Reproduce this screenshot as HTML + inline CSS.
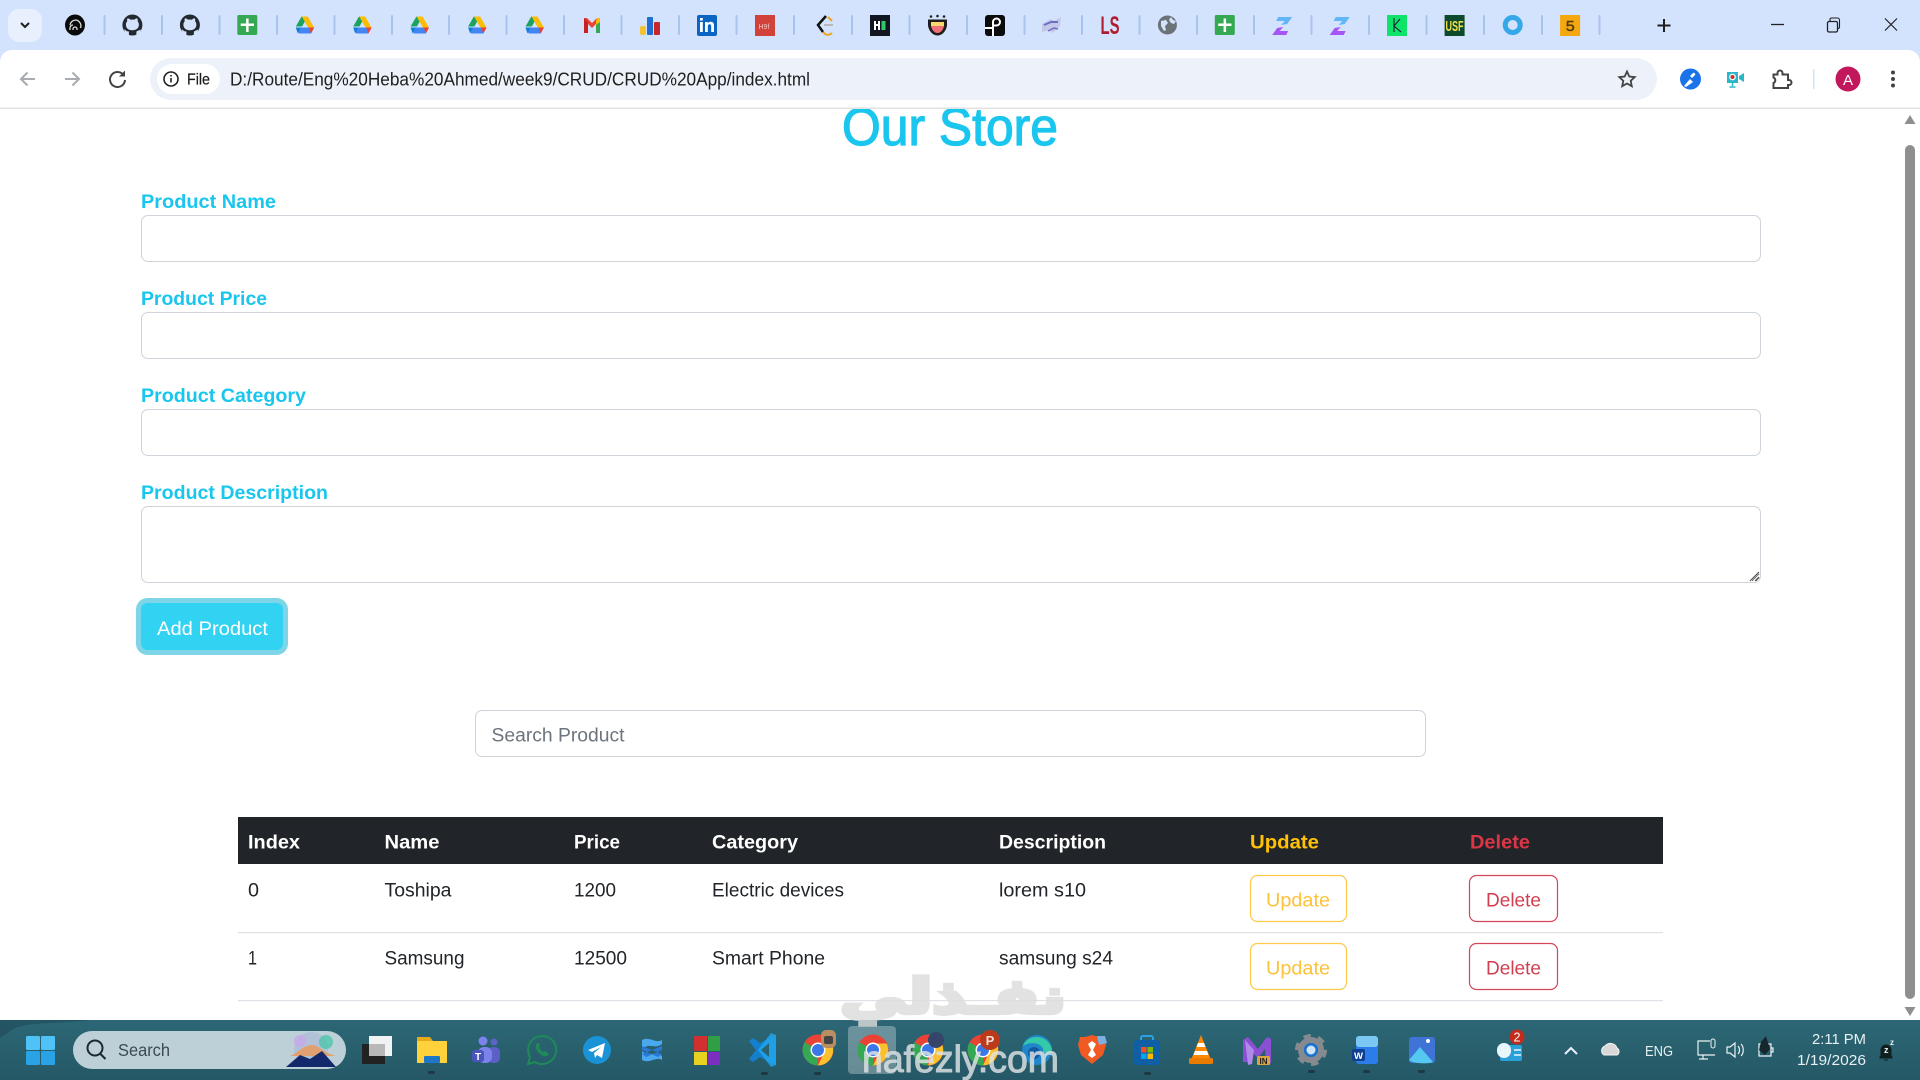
<!DOCTYPE html>
<html lang="en">
<head>
<meta charset="utf-8">
<title>Our Store</title>
<style>
html,body{margin:0;padding:0;width:1920px;height:1080px;overflow:hidden;background:#fff}
body{position:relative;font-family:"Liberation Sans",sans-serif}
.f{position:absolute;box-sizing:border-box;border:1.2px solid #ced4da;border-radius:7px;background:#fff;margin:0;padding:0;outline:none;display:block}
svg#o{position:absolute;left:0;top:0}
text{font-family:"Liberation Sans",sans-serif}
</style>
</head>
<body>
<input class="f" style="left:141px;top:215px;width:1620px;height:47px">
<input class="f" style="left:141px;top:312px;width:1620px;height:47px">
<input class="f" style="left:141px;top:409px;width:1620px;height:47px">
<textarea class="f" style="left:141px;top:506px;width:1620px;height:77px"></textarea>
<input class="f" style="left:475px;top:710px;width:951px;height:47px">

<svg id="o" width="1920" height="1080" viewBox="0 0 1920 1080" xmlns="http://www.w3.org/2000/svg">
<defs>
<symbol id="drive" viewBox="0 0 20 20" overflow="visible">
<path d="M7 1.500h6L7.500 11.500H1.200z" fill="#1aa260" transform="translate(-.2 0)"/>
<path d="M7 1.500h6l6.300 11h-6z" fill="#fbbc04"/>
<path d="M4.200 18.500 1 12.500h18.400l-3.200 6z" fill="#4285f4"/>
<path d="M1 12.500h5l-3 6z" fill="#0f7fd6"/>
<path d="M14 12.500h5.400l-3.200 6z" fill="#ea4335"/>
</symbol>
<symbol id="gh" viewBox="0 0 20 20" overflow="visible">
<ellipse cx="10" cy="10" rx="10" ry="10.500" fill="#24292f"/>
<path transform="translate(10 9) scale(1.300) translate(-10 -9)" d="M5 9.500c0-1 .4-1.900 1-2.600-.2-.7-.1-1.600.2-2.200 1 0 1.900.5 2.400 1a8 8 0 0 1 2.800 0c.5-.5 1.400-1 2.400-1 .3.600.4 1.500.2 2.200.6.700 1 1.600 1 2.600 0 3-2.300 4.300-5 4.300s-5-1.300-5-4.300z" fill="#d3e3fd"/>
<path d="M1.500 14.500c1.500.2 2 1.200 3 1.800l2 .2v4l-3-1.500zM18.500 14.500l-3 1.200-1.500.8v4l3-1.500z" fill="#d3e3fd"/>
</symbol>
<symbol id="sheet" viewBox="0 0 20 20" overflow="visible">
<rect width="20" height="20" rx="1.500" fill="#34a853"/>
<path d="M8.800 3.500h2.500v5h5.400v2.500h-5.400v6H8.800v-6H3.400V8.500h5.400z" fill="#fff"/>
</symbol>
<symbol id="zee" viewBox="0 0 20 20" overflow="visible">
<path d="M6 1h14l-5 7-6 1 3.500-4H4z" fill="#62b6f5"/>
<path d="M14 19H0l5-7 6-1-3.500 4H16z" fill="#a855f7"/>
</symbol>
<symbol id="chrome" viewBox="0 0 32 32" overflow="visible">
<circle cx="16" cy="16" r="15.500" fill="#ea4335"/>
<path d="M16 16 2.600 8.300 A15.500 15.500 0 0 0 16 31.500z" fill="#34a853"/>
<path d="M16 9.500h13.700A15.500 15.500 0 0 1 16 31.500l6-13z" fill="#fbc02d"/>
<circle cx="16" cy="16" r="7.500" fill="#fff"/>
<circle cx="16" cy="16" r="6" fill="#3b78e7"/>
</symbol>
</defs>

<!-- tab strip -->
<rect x="0" y="0" width="1920" height="62" fill="#d3e3fd"/>
<rect x="8" y="9" width="34" height="33" rx="11" fill="#e8f0fd"/>
<path d="M21 23l4 4 4-4" fill="none" stroke="#1f1f1f" stroke-width="2"/>
<g fill="#a9c3ee">
<rect x="103.500" y="15" width="2" height="20" rx="1"/><rect x="161" y="15" width="2" height="20" rx="1"/><rect x="218.500" y="15" width="2" height="20" rx="1"/><rect x="276" y="15" width="2" height="20" rx="1"/><rect x="333.500" y="15" width="2" height="20" rx="1"/><rect x="391" y="15" width="2" height="20" rx="1"/><rect x="448" y="15" width="2" height="20" rx="1"/><rect x="505.500" y="15" width="2" height="20" rx="1"/><rect x="563" y="15" width="2" height="20" rx="1"/><rect x="620.500" y="15" width="2" height="20" rx="1"/><rect x="678" y="15" width="2" height="20" rx="1"/><rect x="735.500" y="15" width="2" height="20" rx="1"/><rect x="793" y="15" width="2" height="20" rx="1"/><rect x="851" y="15" width="2" height="20" rx="1"/><rect x="908.500" y="15" width="2" height="20" rx="1"/><rect x="966" y="15" width="2" height="20" rx="1"/><rect x="1023.500" y="15" width="2" height="20" rx="1"/><rect x="1081" y="15" width="2" height="20" rx="1"/><rect x="1138.500" y="15" width="2" height="20" rx="1"/><rect x="1196" y="15" width="2" height="20" rx="1"/><rect x="1253" y="15" width="2" height="20" rx="1"/><rect x="1310.500" y="15" width="2" height="20" rx="1"/><rect x="1368" y="15" width="2" height="20" rx="1"/><rect x="1425.500" y="15" width="2" height="20" rx="1"/><rect x="1483" y="15" width="2" height="20" rx="1"/><rect x="1541" y="15" width="2" height="20" rx="1"/><rect x="1598.500" y="15" width="2" height="20" rx="1"/>
</g>
<!-- 0 -->
<ellipse cx="75" cy="25" rx="10" ry="10.500" fill="#0a0a0a"/>
<path d="M70 30v-2a3 3 0 0 1 3-3 M70 25a6 6 0 0 1 6-5 6 6 0 0 1 4.500 8 M73 30v-1a2 2 0 0 1 4 0v1" fill="none" stroke="#ddd" stroke-width="1.300"/>
<use href="#gh" x="122.400" y="15" width="20" height="20"/>
<use href="#gh" x="179.900" y="15" width="20" height="20"/>
<use href="#sheet" x="237.300" y="15" width="20" height="20"/>
<use href="#drive" x="294.800" y="15" width="20" height="20"/>
<use href="#drive" x="352.200" y="15" width="20" height="20"/>
<use href="#drive" x="409.600" y="15" width="20" height="20"/>
<use href="#drive" x="467.100" y="15" width="20" height="20"/>
<use href="#drive" x="524.500" y="15" width="20" height="20"/>
<!-- gmail -->
<path d="M584 33V18l3 0 5 5 5-5 3 0v15h-4V24l-4 4-4-4v9z" fill="#ea4335"/>
<path d="M584 18v15h4V22z" fill="#c5221f"/>
<path d="M596 22v11h4V18z" fill="#34a853"/>
<path d="M597 18h3v4l-4 3v-4z" fill="#fbbc04"/>
<!-- bars -->
<rect x="640" y="26" width="6" height="9" rx="2" fill="#f4c430"/>
<rect x="647" y="17" width="6" height="18" rx="1" fill="#1f6fd0"/>
<rect x="654" y="22" width="6" height="13" rx="1" fill="#c9252d"/>
<!-- linkedin -->
<rect x="697" y="15" width="20" height="21" rx="2" fill="#0a66c2"/>
<path d="M700 22h2.800v10H700zM700 18h2.800v2.500H700zM705 22h2.700v1.400c.6-1 1.700-1.600 3-1.600 2.500 0 3.300 1.600 3.300 4V32h-2.800v-5.500c0-1.400-.4-2.300-1.600-2.300s-1.800.9-1.800 2.300V32H705z" fill="#fff"/>
<!-- red -->
<rect x="755" y="15" width="20" height="21" fill="#d1423a"/>
<text x="758.500" y="29" font-size="7" fill="#f4c6c3">H9f</text>
<!-- leetcode -->
<path d="M826 16l-8 9 5 7" fill="none" stroke="#111" stroke-width="2.500"/>
<path d="M824 25h9" stroke="#b8b8b8" stroke-width="2"/>
<path d="M823 32l2 2c2 1.500 5 1 7-1M828 17l4 4" fill="none" stroke="#f0a21c" stroke-width="2"/>
<g transform="translate(1 0)">
<!-- HR -->
<rect x="869" y="15" width="20" height="21" fill="#0f1620"/>
<path d="M873 21h2v3h2v-3h2v9h-2v-4h-2v4h-2z" fill="#fff"/><rect x="880.500" y="21" width="4" height="9" fill="#2ec866"/>
<!-- face -->
<path d="M927 19.500h19v5c0 5-4 11-9.500 11s-9.500-6-9.500-11z" fill="#1d1d1d"/>
<path d="M930 22h13v3c0 4-3 8-6.500 8S930 29 930 25z" fill="#f0707a"/>
<path d="M930 22h13v4h-13z" fill="#f9d76f"/>
<circle cx="930" cy="16.500" r="1.300" fill="#222"/><circle cx="943" cy="16.500" r="1.300" fill="#222"/><circle cx="936.500" cy="16" r="1.300" fill="#222"/>
<!-- P -->
<rect x="984" y="15" width="20" height="21" rx="3" fill="#0b0b0b"/>
<path d="M984 28h8v8M992 28v-6a3.500 3.500 0 1 1 3.500 3.500H992" fill="none" stroke="#fff" stroke-width="2"/>
<!-- cubes -->
<path d="M1041 24l9-5 3 2 7-4-1 9-7 7-4-3-7 2z" fill="#c4c6ea"/>
<path d="M1043 25l7-3 7 0" fill="none" stroke="#6a6fbe" stroke-width="2"/>
<path d="M1047 31l6-3 4 1" fill="none" stroke="#6a6fbe" stroke-width="1.500"/>
<!-- LS -->
<text x="1099.500" y="34" font-size="25" font-weight="700" fill="#b01c2e" textLength="19" lengthAdjust="spacingAndGlyphs">LS</text>
<!-- globe -->
<circle cx="1166.400" cy="25" r="9.500" fill="#6b7278"/>
<path d="M1160 21l5-1 2 3-3 3 1 4-2 1-3-5zM1170 17l2 3 3 1-2 3-3-1-2-3z" fill="#d3e3fd"/>
<use href="#sheet" x="1213.800" y="15" width="20" height="20"/>
<use href="#zee" x="1271.200" y="16" width="20" height="20"/>
<use href="#zee" x="1328.700" y="16" width="20" height="20"/>
<!-- R -->
<rect x="1386" y="15" width="20" height="21" fill="#0ee36a"/>
<path d="M1393 18v14M1399 19l-6 7 7 6" fill="none" stroke="#123" stroke-width="1.100"/>
<!-- USF -->
<rect x="1443.600" y="15" width="20" height="21" fill="#0d4a2b"/>
<text x="1444.500" y="31" font-size="15" font-weight="700" fill="#f1e04b" textLength="18" lengthAdjust="spacingAndGlyphs">USF</text>
<g transform="translate(.7 0)">
<!-- ring -->
<circle cx="1511" cy="25" r="7.500" fill="none" stroke="#35a8ea" stroke-width="5"/>
<!-- 5 -->
<rect x="1558.400" y="15" width="20" height="21" fill="#f5a70f"/>
<text x="1564" y="31" font-size="15" fill="#4d3a10" stroke="#4d3a10" stroke-width=".4" textLength="9" lengthAdjust="spacingAndGlyphs">5</text>
</g>
</g>
<!-- new tab + window controls -->
<path d="M1664 19v13M1657.500 25.500h13" stroke="#1f1f1f" stroke-width="2"/>
<path d="M1771 24.500h13" stroke="#222" stroke-width="1.300"/>
<rect x="1827.500" y="21.500" width="10" height="10.500" rx="1.500" fill="none" stroke="#222" stroke-width="1.300"/>
<path d="M1830 21v-1.500a1.500 1.500 0 0 1 1.500-1.500h6a2 2 0 0 1 2 2v7a1.500 1.500 0 0 1-1.500 1.500" fill="none" stroke="#222" stroke-width="1.100"/>
<path d="M1885 18.500l12 12M1897 18.500l-12 12" stroke="#222" stroke-width="1.200"/>

<!-- toolbar -->
<path d="M0 62a12 12 0 0 1 12-12H1908a12 12 0 0 1 12 12V108H0z" fill="#fff"/>
<rect x="0" y="107.500" width="1920" height="1.500" fill="#e2e2e2"/>
<path d="M35 79H21M27.500 72.500 21 79l6.500 6.500" fill="none" stroke="#a8abb0" stroke-width="2"/>
<path d="M65 79h14M72.500 72.500 79 79l-6.500 6.500" fill="none" stroke="#a8abb0" stroke-width="2"/>
<path d="M123.500 75a7.500 7.500 0 1 0 1.500 5" fill="none" stroke="#444" stroke-width="2"/>
<path d="M125 70.500v6h-6z" fill="#444"/>
<rect x="150" y="58" width="1507" height="42" rx="21" fill="#edf2fa"/>
<rect x="157" y="64" width="63" height="30" rx="15" fill="#fff"/>
<circle cx="171" cy="79" r="7" fill="none" stroke="#222" stroke-width="1.600"/>
<path d="M171 78v4.500M171 75v1.500" stroke="#222" stroke-width="1.600"/>
<text x="187" y="84.500" font-size="16" fill="#1a1a1a" stroke="#1a1a1a" stroke-width=".2" textLength="23" lengthAdjust="spacingAndGlyphs">File</text>
<text x="230" y="85.500" font-size="18" fill="#1f1f1f" textLength="580" lengthAdjust="spacingAndGlyphs">D:/Route/Eng%20Heba%20Ahmed/week9/CRUD/CRUD%20App/index.html</text>
<path d="M1627 71.500l2.300 5 5.400.6-4 3.700 1.100 5.400-4.800-2.700-4.800 2.700 1.100-5.400-4-3.700 5.400-.6z" fill="none" stroke="#444" stroke-width="1.800"/>
<circle cx="1690.500" cy="79" r="10.500" fill="#1a73e8"/>
<path d="M1684 86l6-7 3 3-7 5zM1690 76l3-3c1-1 3 1 2 2l-3 3z" fill="#fff"/>
<path d="M1727 72h11v11h-11z M1739 76l5-3v9l-5-3z" fill="#29b6c6"/>
<circle cx="1732.500" cy="77" r="3.400" fill="#e8f7fa"/><circle cx="1732.500" cy="77" r="2" fill="#d32f2f"/>
<path d="M1732.500 83v3M1729.500 87h6" stroke="#29b6c6" stroke-width="1.500"/>
<path d="M1773.500 74.500h4v-1.500a2.500 2.500 0 0 1 5 0v1.500h5.500v5.500h1a2.500 2.500 0 0 1 0 5h-1v3h-14.500v-5a3 3 0 0 0 0-5.500z" fill="none" stroke="#444" stroke-width="2"/>
<rect x="1813" y="69" width="1.500" height="20" fill="#d3e3fd"/>
<circle cx="1848" cy="79" r="12.500" fill="#c2185b"/>
<text x="1848" y="85" font-size="15" fill="#fff" text-anchor="middle">A</text>
<circle cx="1893" cy="72.500" r="2" fill="#444"/><circle cx="1893" cy="79" r="2" fill="#444"/><circle cx="1893" cy="85.500" r="2" fill="#444"/>

<!-- heading -->
<text x="842" y="145" font-size="53" fill="#1ac6ee" stroke="#1ac6ee" stroke-width="1.200" textLength="216" lengthAdjust="spacingAndGlyphs">Our Store</text>
<rect x="0" y="107.500" width="1880" height="1.500" fill="#e2e2e2"/>

<!-- labels -->
<g font-size="19.600" font-weight="700" fill="#1ac6ee">
<text x="141" y="208" textLength="135" lengthAdjust="spacingAndGlyphs">Product Name</text>
<text x="141" y="305" textLength="126" lengthAdjust="spacingAndGlyphs">Product Price</text>
<text x="141" y="402" textLength="165" lengthAdjust="spacingAndGlyphs">Product Category</text>
<text x="141" y="499" textLength="187" lengthAdjust="spacingAndGlyphs">Product Description</text>
</g>
<path d="M1750 581l9-9M1755 581l4-4" stroke="#555" stroke-width="1.200" fill="none"/>

<!-- add button -->
<rect x="138.500" y="600.500" width="147" height="52" rx="9" fill="#31d2f2" stroke="#7dd5e7" stroke-width="5"/>
<text x="157" y="635" font-size="19.600" fill="#fff" textLength="111" lengthAdjust="spacingAndGlyphs">Add Product</text>

<!-- search placeholder -->
<text x="491.500" y="741.500" font-size="19.600" fill="#6c757d" textLength="133" lengthAdjust="spacingAndGlyphs">Search Product</text>

<!-- table -->
<rect x="238" y="817" width="1425" height="47" fill="#212529"/>
<g font-size="19.600" font-weight="700" fill="#fff">
<text x="248" y="848.500" textLength="52" lengthAdjust="spacingAndGlyphs">Index</text>
<text x="384.500" y="848.500" textLength="55" lengthAdjust="spacingAndGlyphs">Name</text>
<text x="574" y="848.500" textLength="46" lengthAdjust="spacingAndGlyphs">Price</text>
<text x="712" y="848.500" textLength="86" lengthAdjust="spacingAndGlyphs">Category</text>
<text x="999" y="848.500" textLength="107" lengthAdjust="spacingAndGlyphs">Description</text>
<text x="1250" y="848.500" fill="#ffc107" textLength="69" lengthAdjust="spacingAndGlyphs">Update</text>
<text x="1470" y="848.500" fill="#dc3545" textLength="60" lengthAdjust="spacingAndGlyphs">Delete</text>
</g>
<g font-size="19.600" fill="#212529">
<text x="248" y="896.500" textLength="11" lengthAdjust="spacingAndGlyphs">0</text>
<text x="384.500" y="896.500" textLength="67" lengthAdjust="spacingAndGlyphs">Toshipa</text>
<text x="574" y="896.500" textLength="42" lengthAdjust="spacingAndGlyphs">1200</text>
<text x="712" y="896.500" textLength="132" lengthAdjust="spacingAndGlyphs">Electric devices</text>
<text x="999" y="896.500" textLength="87" lengthAdjust="spacingAndGlyphs">lorem s10</text>
<text x="248" y="964.500" textLength="9" lengthAdjust="spacingAndGlyphs">1</text>
<text x="384.500" y="964.500" textLength="80" lengthAdjust="spacingAndGlyphs">Samsung</text>
<text x="574" y="964.500" textLength="53" lengthAdjust="spacingAndGlyphs">12500</text>
<text x="712" y="964.500" textLength="113" lengthAdjust="spacingAndGlyphs">Smart Phone</text>
<text x="999" y="964.500" textLength="114" lengthAdjust="spacingAndGlyphs">samsung s24</text>
</g>
<rect x="238" y="932" width="1425" height="1.200" fill="#dee2e6"/>
<rect x="238" y="1000" width="1425" height="1.200" fill="#dee2e6"/>
<g fill="none" stroke-width="1.200">
<rect x="1250.500" y="875.500" width="96" height="46" rx="7" stroke="#ffc94a"/>
<rect x="1250.500" y="943.500" width="96" height="46" rx="7" stroke="#ffc94a"/>
<rect x="1469.500" y="875.500" width="88" height="46" rx="7" stroke="#d2475a"/>
<rect x="1469.500" y="943.500" width="88" height="46" rx="7" stroke="#d2475a"/>
</g>
<g font-size="19.600">
<text x="1266" y="906.500" fill="#fcc23a" textLength="64" lengthAdjust="spacingAndGlyphs">Update</text>
<text x="1266" y="974.500" fill="#fcc23a" textLength="64" lengthAdjust="spacingAndGlyphs">Update</text>
<text x="1486" y="906.500" fill="#cf3f50" textLength="55" lengthAdjust="spacingAndGlyphs">Delete</text>
<text x="1486" y="974.500" fill="#cf3f50" textLength="55" lengthAdjust="spacingAndGlyphs">Delete</text>
</g>

<!-- scrollbar -->
<path d="M1910 115l5.500 9h-11z" fill="#8f8f8f"/>
<rect x="1905" y="145" width="10" height="854" rx="5" fill="#8f8f8f"/>
<path d="M1910 1016l5.500-9h-11z" fill="#8f8f8f"/>

<!-- taskbar -->
<linearGradient id="tb" x1="0" y1="0" x2="0" y2="1"><stop offset="0" stop-color="#2c6775"/><stop offset="1" stop-color="#255866"/></linearGradient>
<rect x="0" y="1020" width="1920" height="60" fill="url(#tb)"/>
<path d="M0 1020h90c-30 4-60 2-75 8l-15 10z" fill="#1f4a58" opacity=".6"/>
<!-- start -->
<g fill="#29a3e6">
<rect x="26" y="1036" width="14" height="14" rx="1.500" fill="#4fc3f7"/><rect x="41" y="1036" width="14" height="14" rx="1.500" fill="#4fc3f7"/>
<rect x="26" y="1051" width="14" height="14" rx="1.500"/><rect x="41" y="1051" width="14" height="14" rx="1.500"/>
</g>
<!-- search -->
<rect x="73" y="1031" width="273" height="38" rx="19" fill="#bdd0d8"/>
<circle cx="95" cy="1048" r="7.500" fill="none" stroke="#1c2a30" stroke-width="2"/>
<path d="M100.500 1054l5 5" stroke="#1c2a30" stroke-width="2"/>
<text x="118" y="1056" font-size="17.500" fill="#3b4a50" textLength="52" lengthAdjust="spacingAndGlyphs">Search</text>
<circle cx="311" cy="1049" r="17" fill="#a8b8d8" opacity=".6"/>
<path d="M290 1056c8-3 12-10 21-11 9 0 12 8 25 11z" fill="#e0a070"/>
<path d="M286 1067l14-12 10 4 12-8 14 16z" fill="#13296b"/>
<circle cx="326" cy="1042" r="7" fill="#3fc4a6" opacity=".7"/><circle cx="300" cy="1041" r="6" fill="#c8a8e8" opacity=".8"/>
<!-- taskview -->
<rect x="362" y="1044" width="23" height="20" fill="#222"/>
<rect x="369" y="1036" width="23" height="20" fill="#f0f2f3"/>
<rect x="369" y="1044" width="16" height="12" fill="#b8b8b8"/>
<!-- explorer -->
<path d="M417 1037h13l3 4h14v22h-30z" fill="#e8a91a"/>
<rect x="417" y="1041" width="30" height="22" fill="#ffd23c"/>
<rect x="424" y="1056" width="16" height="7" rx="1" fill="#1d77c6"/>
<rect x="428" y="1071" width="7" height="3" rx="1.500" fill="#1d3a44"/>
<!-- teams -->
<circle cx="483" cy="1041" r="4.500" fill="#7b83eb"/><circle cx="494" cy="1042" r="3.500" fill="#5b63c8"/>
<rect x="488" y="1047" width="12" height="16" rx="5" fill="#5b5fc7"/>
<rect x="478" y="1047" width="14" height="16" rx="6" fill="#7b83eb"/>
<rect x="472" y="1050" width="12" height="12" rx="3" fill="#4b53bc"/>
<text x="478" y="1060" font-size="10" font-weight="700" fill="#fff" text-anchor="middle">T</text>
<!-- whatsapp -->
<path d="M542 1036a14 14 0 1 1-7 26l-7 2 2-7a14 14 0 0 1 12-21z" fill="none" stroke="#1d8a58" stroke-width="2"/>
<path d="M537 1043c-2 2-2 5 1 9s7 5 9 4c2-1 2-3 1-3l-3-2-2 1c-2-1-3-3-4-5l1-2-1-2z" fill="#1d8a58"/>
<!-- telegram -->
<circle cx="597" cy="1050" r="14" fill="#1a92d8"/>
<path d="M588 1050l17-7-3 15-5-3-2 3-1-5 7-6-9 5z" fill="#fff"/>
<!-- blue x -->
<path d="M642 1040c8-4 14 4 20 0v4c-8 6-12-2-20 5zM642 1060c8 4 14-4 20 0v-4c-8-6-12 2-20-5z" fill="#4aa8ef"/>
<path d="M642 1046l20 8-4 3-16-7zM662 1046l-20 8 4 3 16-7z" fill="#2a78d6"/>
<!-- palette -->
<rect x="694" y="1036" width="13" height="15" fill="#d03030"/><rect x="708" y="1036" width="12" height="15" fill="#2f9e44"/>
<rect x="694" y="1052" width="13" height="13" fill="#e6d21f"/><rect x="708" y="1052" width="12" height="13" fill="#7b2fbf"/>
<!-- vscode -->
<g transform="translate(5 0)">
<path d="M771 1035v30l-16-8-7 5-4-3 7-9-7-9 4-3 7 5z" fill="#1480cd"/>
<path d="M771 1035v30l-5 2-13-17 13-17z" fill="#23a6f0" opacity=".8"/>
<path d="M764 1043v14l-8-7z" fill="#2a6270"/>
<rect x="756" y="1072" width="7" height="3" rx="1.500" fill="#1d3a44"/>
</g>
<!-- chrome x5 -->
<use href="#chrome" x="802" y="1034" width="32" height="32"/>
<rect x="821" y="1030" width="15" height="18" rx="5" fill="#b88d60"/><rect x="824" y="1036" width="9" height="8" rx="2" fill="#444"/>
<rect x="814" y="1072" width="7" height="3" rx="1.500" fill="#1d3a44"/>
<rect x="848" y="1026" width="48" height="48" rx="4" fill="#fff" opacity=".3"/>
<use href="#chrome" x="857" y="1034" width="32" height="32"/>
<use href="#chrome" x="912" y="1034" width="32" height="32"/>
<circle cx="936" cy="1040" r="8" fill="#35456a"/>
<use href="#chrome" x="967" y="1034" width="32" height="32"/>
<circle cx="990" cy="1040" r="10" fill="#bb3a1b"/>
<text x="990" y="1045" font-size="13" font-weight="700" fill="#f6dcd2" text-anchor="middle">P</text>
<!-- edge -->
<circle cx="1037" cy="1050" r="15" fill="#1f86c9"/>
<path d="M1023 1046c3-11 24-14 29 3 0 5-6 5-9 3 2-8-12-12-20-6z" fill="#34c9a8"/>
<circle cx="1034" cy="1053" r="6" fill="#1458a0"/>
<!-- brave -->
<path d="M1092 1035l7 2 5 0 2 8-3 10-11 9-11-9-3-10 2-8 5 0z" fill="#f15a22"/>
<path d="M1092 1041l-4 3 3 6-3 5 4 3 4-3-3-5 3-6z" fill="#fff"/>
<path d="M1097 1036l8 0 2 7-8 2z" fill="#7db0e0"/>
<!-- store -->
<path d="M1141 1041v-3a2 2 0 0 1 2-2h8a2 2 0 0 1 2 2v3" fill="none" stroke="#29a3e6" stroke-width="2"/>
<rect x="1134" y="1040" width="26" height="25" rx="3" fill="#0f5fa6"/>
<rect x="1141" y="1047" width="5.500" height="5.500" fill="#f25022"/><rect x="1147.500" y="1047" width="5.500" height="5.500" fill="#7fba00"/>
<rect x="1141" y="1053.500" width="5.500" height="5.500" fill="#00a4ef"/><rect x="1147.500" y="1053.500" width="5.500" height="5.500" fill="#ffb900"/>
<rect x="1144" y="1072" width="7" height="3" rx="1.500" fill="#1d3a44"/>
<!-- vlc -->
<path d="M1201 1035l10 25h-20z" fill="#ff8800"/>
<path d="M1198 1043h6l1.500 4h-9zM1195 1051h12l1.500 4h-15z" fill="#fff"/>
<rect x="1189" y="1058" width="24" height="6" rx="1.500" fill="#e87b00"/>
<!-- onenote N -->
<path d="M1243 1062v-22l5-3 10 12 9-12 4 2v24l-5 2-1-16-7 9-9-9v13z" fill="#8a4fd3"/>
<path d="M1245 1040l9 10-2 14-4 1z" fill="#b08ae8"/>
<rect x="1257" y="1056" width="13" height="9" rx="1" fill="#d9a441"/>
<text x="1263.500" y="1064" font-size="8" font-weight="700" fill="#222" text-anchor="middle">IN</text>
<!-- settings -->
<circle cx="1311" cy="1050" r="14" fill="none" stroke="#848a8f" stroke-width="4" stroke-dasharray="7.300 7.300"/>
<circle cx="1311" cy="1050" r="10" fill="none" stroke="#848a8f" stroke-width="6"/>
<circle cx="1311" cy="1050" r="7" fill="#1a72d0"/><circle cx="1311" cy="1050" r="4.500" fill="#cfe4f6"/>
<rect x="1308" y="1070" width="7" height="3" rx="1.500" fill="#1d3a44"/>
<!-- word -->
<rect x="1356" y="1036" width="22" height="28" rx="3" fill="#2b7de9"/>
<rect x="1356" y="1036" width="22" height="11" rx="3" fill="#7cc8f5"/>
<rect x="1352" y="1049" width="13" height="12" rx="2" fill="#103f91"/>
<text x="1358.500" y="1059" font-size="9.500" font-weight="700" fill="#fff" text-anchor="middle">W</text>
<rect x="1363" y="1070" width="7" height="3" rx="1.500" fill="#1d3a44"/>
<!-- photos -->
<rect x="1409" y="1037" width="26" height="26" rx="3" fill="#3f74d6"/>
<path d="M1409 1060l11-13 13 15c-3 2-20 2-24-2z" fill="#54c8f0"/>
<circle cx="1428" cy="1041" r="2" fill="#fff"/>
<rect x="1418" y="1070" width="7" height="3" rx="1.500" fill="#1d3a44"/>
<!-- outlook -->
<rect x="1500" y="1045" width="22" height="16" rx="2" fill="#2aa0d8"/>
<rect x="1497" y="1043" width="14" height="15" rx="7" fill="#e8f7fd"/>
<path d="M1514 1050h7M1514 1055h7" stroke="#e8f7fd" stroke-width="1.500"/>
<circle cx="1517" cy="1037" r="7.500" fill="#c42b1c"/>
<text x="1517" y="1041.500" font-size="12.500" fill="#fff" text-anchor="middle">2</text>
<!-- tray -->
<path d="M1565 1054l6-6 6 6" fill="none" stroke="#eef" stroke-width="2"/>
<path d="M1604 1055a5 5 0 0 1 1-9 7 7 0 0 1 12 2 4 4 0 0 1 0 7z" fill="#d8d8d8" stroke="#f4f4f4"/>
<text x="1645" y="1056" font-size="15" fill="#e7f0f2" textLength="28" lengthAdjust="spacingAndGlyphs">ENG</text>
<path d="M1710 1041h-12v14h17M1703 1055v4M1699 1059h9" fill="none" stroke="#eaf2f4" stroke-width="1.200"/>
<rect x="1711" y="1039" width="4" height="9" rx="2" fill="none" stroke="#eaf2f4" stroke-width="1"/>
<path d="M1727 1047h3l5-4v14l-5-4h-3z M1738 1046c2 2 2 6 0 8 M1741 1044c3 3 3 9 0 12" fill="none" stroke="#eaf2f4" stroke-width="1.200"/>
<path d="M1759 1044h12v12h-12zM1771 1048h2v4h-2z" fill="none" stroke="#eaf2f4" stroke-width="1.200"/>
<path d="M1766 1036l-5 6-2 8 6 5 5-6z" fill="#16282d"/>
<text x="1866" y="1044" font-size="14.500" fill="#e7f0f2" text-anchor="end" textLength="54" lengthAdjust="spacingAndGlyphs">2:11 PM</text>
<text x="1866" y="1065" font-size="14.500" fill="#e7f0f2" text-anchor="end" textLength="69" lengthAdjust="spacingAndGlyphs">1/19/2026</text>
<path d="M1880 1058v-1l1-1v-6a5 5 0 0 1 10 0v6l1 1v1zM1884 1060h4" fill="#10201f" stroke="#10201f"/>
<text x="1884" y="1053" font-size="9" font-weight="700" fill="#eaf2f4">z</text>
<text x="1890" y="1045" font-size="8" font-weight="700" fill="#eaf2f4">z</text>

<!-- watermark -->
<g opacity=".82">
<text transform="translate(1066 1013) scale(.83 .6)" x="0" y="0" font-size="80" font-weight="700" fill="#dcdcdc" stroke="#dcdcdc" stroke-width="7" style="font-family:'DejaVu Sans',sans-serif" direction="rtl" text-anchor="start">نفـذلي</text>
<text x="862" y="1072" font-size="38" fill="#e0e4e6" stroke="#e0e4e6" stroke-width="1" textLength="197" lengthAdjust="spacingAndGlyphs">nafezly.com</text>
</g>
</svg>
</body>
</html>
